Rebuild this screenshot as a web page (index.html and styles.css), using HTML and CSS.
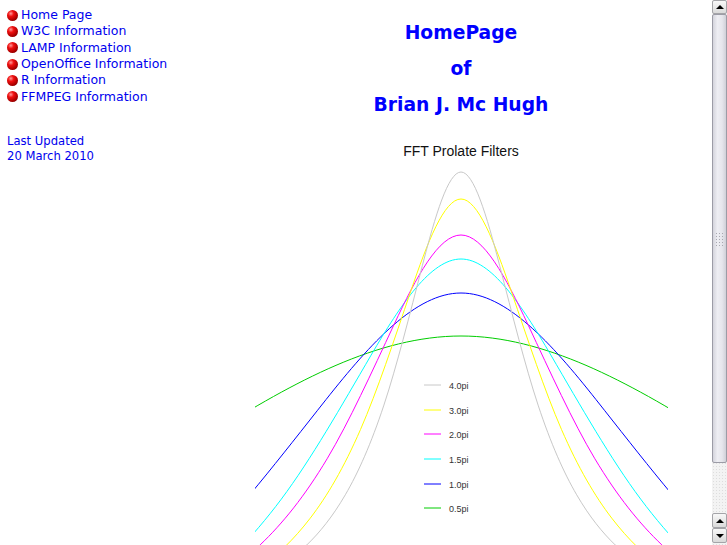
FILE: index.html
```html
<!DOCTYPE html>
<html>
<head>
<meta charset="utf-8">
<title>HomePage of Brian J. Mc Hugh</title>
<link rel="stylesheet" href="styles.css">
</head>
<body>
<div class="frames">
  <nav class="side">
    <ul class="menu">
      <li><span class="ball"></span><a href="#">Home Page</a></li>
      <li><span class="ball"></span><a href="#">W3C Information</a></li>
      <li><span class="ball"></span><a href="#">LAMP Information</a></li>
      <li><span class="ball"></span><a href="#">OpenOffice Information</a></li>
      <li><span class="ball"></span><a href="#">R Information</a></li>
      <li><span class="ball"></span><a href="#">FFMPEG Information</a></li>
    </ul>
    <p class="updated">Last Updated<br>20 March 2010</p>
  </nav>
  <main class="main">
    <div class="titles">
      <h3 class="title">HomePage</h3>
      <h3 class="title">of</h3>
      <h3 class="title">Brian J. Mc Hugh</h3>
    </div>
    <svg class="chart" width="502" height="407" viewBox="210 138 502 407">
      <defs>
        <clipPath id="plotclip"><rect x="255" y="138" width="413" height="420"/></clipPath>
        <g id="half">
          <path class="c-green" d="M461,336 C544.33,336 627.67,381.64 711,433.8"/>
          <path class="c-blue" d="M461,293 C506,293 551,342.75 596,399.6 C641,456.45 686,515.08 731,559.5"/>
          <path class="c-cyan" d="M461,259 C490.95,259 520.9,303.83 550.85,355.06 C580.8,406.29 610.75,459.12 640.7,499.15 C670.65,539.18 700.6,568.77 730.55,591.5"/>
          <path class="c-magenta" d="M461,235 C483.32,235 505.63,276.78 527.95,324.52 C550.27,372.26 572.58,421.5 594.9,458.8 C617.22,496.1 639.53,523.68 661.85,544.87 C684.17,566.06 706.48,581.14 728.8,593.08"/>
          <path class="c-yellow" d="M461,199 C477.75,199 494.5,242.03 511.25,291.2 C528,340.37 544.75,391.08 561.5,429.5 C578.25,467.92 595,496.33 611.75,518.15 C628.5,539.97 645.25,555.51 662,567.8"/>
          <path class="c-gray" d="M461,172 C473.85,172 486.7,215.51 499.55,265.24 C512.4,314.97 525.25,366.25 538.1,405.1 C550.95,443.95 563.8,472.68 576.65,494.75 C589.5,516.82 602.35,532.53 615.2,544.96 C628.05,557.39 640.9,566.51 653.75,573.9"/>
        </g>
      </defs>
      <text class="chart-title" x="461" y="156">FFT Prolate Filters</text>
      <g class="curves" clip-path="url(#plotclip)">
        <use href="#half"/>
        <use href="#half" transform="matrix(-1 0 0 1 922 0)"/>
      </g>
      <g class="legend">
        <line class="c-gray" x1="424" y1="385" x2="441" y2="385"/>
        <text x="449" y="388.5">4.0pi</text>
        <line class="c-yellow" x1="424" y1="410" x2="441" y2="410"/>
        <text x="449" y="413.5">3.0pi</text>
        <line class="c-magenta" x1="424" y1="434" x2="441" y2="434"/>
        <text x="449" y="437.5">2.0pi</text>
        <line class="c-cyan" x1="424" y1="459" x2="441" y2="459"/>
        <text x="449" y="462.5">1.5pi</text>
        <line class="c-blue" x1="424" y1="484" x2="441" y2="484"/>
        <text x="449" y="487.5">1.0pi</text>
        <line class="c-green" x1="424" y1="508" x2="441" y2="508"/>
        <text x="449" y="511.5">0.5pi</text>
      </g>
    </svg>
  </main>
  <div class="scrollbar">
    <div class="sb-btn sb-top"><span class="arrow-up"></span></div>
    <div class="sb-thumb"><span class="grip"></span></div>
    <div class="sb-track"></div>
    <div class="sb-btn"><span class="arrow-up"></span></div>
    <div class="sb-btn"><span class="arrow-down"></span></div>
  </div>
</div>
</body>
</html>
```
FILE: styles.css
```css
html, body {
  margin: 0;
  padding: 0;
  background: #ffffff;
}

body {
  font-family: "DejaVu Sans", Verdana, sans-serif;
  width: 727px;
  height: 545px;
  overflow: hidden;
}

.frames {
  display: flex;
  height: 545px;
}

.side {
  width: 210px;
  flex: none;
  padding: 7px 0 0 7px;
  box-sizing: border-box;
  font-size: 12.5px;
}

.menu {
  list-style: none;
  margin: 0;
  padding: 0;
}

.menu li {
  display: flex;
  align-items: center;
  gap: 3px;
  height: 16.33px;
  line-height: 16.33px;
}

.menu a {
  color: #0000ee;
  text-decoration: none;
  white-space: nowrap;
}

.ball {
  width: 11px;
  height: 11px;
  border-radius: 50%;
  flex: none;
  background: radial-gradient(circle at 35% 32%, #ff9a9a 0, #f01010 28%, #b00000 62%, #600000 100%);
}

.updated {
  margin: 29px 0 0 0;
  font-size: 11.6px;
  line-height: 15px;
  color: #0000ee;
}

.main {
  width: 502px;
  flex: none;
  display: flex;
  flex-direction: column;
  align-items: center;
}

.titles {
  display: flex;
  flex-direction: column;
  align-items: center;
  gap: 14px;
  padding-top: 22px;
}

.title {
  margin: 0;
  font-size: 18.72px;
  line-height: 22px;
  font-weight: bold;
  color: #0000ff;
}

.chart {
  display: block;
  margin-top: 22px;
  flex: none;
}

.chart-title {
  font-family: "Liberation Sans", Arial, sans-serif;
  font-size: 14px;
  text-anchor: middle;
  fill: #111111;
}

.legend text {
  font-family: "Liberation Sans", Arial, sans-serif;
  font-size: 9px;
  fill: #333333;
}

.c-gray, .c-yellow, .c-magenta, .c-cyan, .c-blue, .c-green {
  fill: none;
  stroke-width: 1;
}

.c-gray { stroke: #c8c8c8; }
.c-yellow { stroke: #ffff00; }
.c-magenta { stroke: #ff00ff; }
.c-cyan { stroke: #00ffff; }
.c-blue { stroke: #0000ff; }
.c-green { stroke: #00cd00; }

.scrollbar {
  width: 15px;
  flex: none;
  display: flex;
  flex-direction: column;
  background: #f3f3f3;
  background-image: radial-gradient(#dddddd 0.6px, transparent 0.8px);
  background-size: 3px 3px;
  padding-bottom: 2px;
  box-sizing: border-box;
}

.sb-btn {
  height: 15px;
  flex: none;
  box-sizing: border-box;
  border: 1px solid #a4a4a8;
  border-radius: 2px;
  background: linear-gradient(#f8f8f8, #dadada);
  display: flex;
  align-items: center;
  justify-content: center;
}

.sb-top {
  height: 14px;
}

.arrow-up {
  width: 0;
  height: 0;
  border-left: 4px solid transparent;
  border-right: 4px solid transparent;
  border-bottom: 4px solid #000000;
}

.arrow-down {
  width: 0;
  height: 0;
  border-left: 4px solid transparent;
  border-right: 4px solid transparent;
  border-top: 4px solid #000000;
}

.sb-thumb {
  height: 449px;
  flex: none;
  box-sizing: border-box;
  border: 1px solid #9c9ca6;
  border-radius: 2px;
  background: linear-gradient(to right, #d4d4dc, #eeeef3 35%, #e6e6ec 70%, #d0d0d8);
  display: flex;
  align-items: center;
  justify-content: center;
}

.grip {
  width: 9px;
  height: 14px;
  background-image: radial-gradient(#a8a8b0 0.8px, transparent 1px);
  background-size: 3px 3px;
}

.sb-track {
  flex: 1;
}
```
